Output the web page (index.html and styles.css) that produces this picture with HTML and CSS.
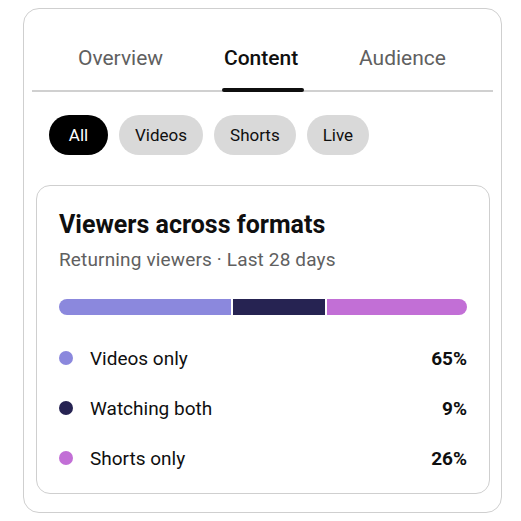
FILE: index.html
```html
<!DOCTYPE html>
<html lang="en">
<head>
  <meta charset="UTF-8">
  <meta name="viewport" content="width=device-width, initial-scale=1.0">
  <title>Content</title>
  <link rel="stylesheet" href="styles.css">
</head>
<body>

  <div class="panel">
    <nav class="tabs">
      <div class="tab">Overview</div>
      <div class="tab active">Content</div>
      <div class="tab">Audience</div>
    </nav>

    <div class="chips">
      <button class="chip selected">All</button>
      <button class="chip">Videos</button>
      <button class="chip">Shorts</button>
      <button class="chip">Live</button>
    </div>

    <div class="card">
      <h2 class="card-title">Viewers across formats</h2>
      <div class="card-sub">Returning viewers · Last 28 days</div>

      <div class="bar">
        <div class="seg seg-videos"></div>
        <div class="seg seg-both"></div>
        <div class="seg seg-shorts"></div>
      </div>

      <div class="legend">
        <div class="legend-row">
          <span class="dot dot-videos"></span>
          <span class="legend-label">Videos only</span>
          <span class="legend-value">65%</span>
        </div>
        <div class="legend-row">
          <span class="dot dot-both"></span>
          <span class="legend-label">Watching both</span>
          <span class="legend-value">9%</span>
        </div>
        <div class="legend-row">
          <span class="dot dot-shorts"></span>
          <span class="legend-label">Shorts only</span>
          <span class="legend-value">26%</span>
        </div>
      </div>
    </div>
  </div>

</body>
</html>
```

FILE: styles.css
```css
body {
  margin: 0;
  font-family: Roboto, "Liberation Sans", Arial, sans-serif;
  background-color: #fff;
  color: #0f0f0f;
}

.panel {
  width: 479px;
  box-sizing: border-box;
  margin: 8px 0 0 23px;
  padding: 0 8px 18px;
  border: 1px solid #cfcfcf;
  border-radius: 16px;
}

.tabs {
  display: flex;
  justify-content: space-between;
  padding: 0 47px 0 46px;
  border-bottom: 2px solid #d0d0d0;
}

.tab {
  position: relative;
  padding: 37px 0 20px;
  font-size: 21px;
  line-height: 24px;
  color: #606060;
}

.tab.active {
  color: #0f0f0f;
  font-weight: 500;
}

.tab.active::after {
  content: "";
  position: absolute;
  left: -2px;
  bottom: -2px;
  width: calc(100% + 8px);
  height: 4px;
  border-radius: 2px;
  background-color: #0f0f0f;
}

.chips {
  display: flex;
  gap: 11px;
  margin-top: 23px;
  padding-left: 17px;
}

.chip {
  min-width: 59px;
  height: 40px;
  padding: 0 16px;
  border: none;
  border-radius: 20px;
  background-color: #d9d9d9;
  color: #0f0f0f;
  font-family: inherit;
  font-size: 17px;
}

.chip.selected {
  background-color: #000;
  color: #fff;
}

.card {
  margin: 30px 3px 0 4px;
  padding: 25px 22px 10px;
  border: 1px solid #cfcfcf;
  border-radius: 14px;
}

.card-title {
  margin: 0;
  font-size: 25px;
  line-height: 28px;
  font-weight: 700;
}

.card-sub {
  margin-top: 9px;
  font-size: 19px;
  line-height: 24px;
  letter-spacing: 0.15px;
  color: #606060;
}

.bar {
  display: flex;
  gap: 2px;
  height: 16px;
  margin-top: 27px;
  border-radius: 8px;
  overflow: hidden;
}

.seg-videos {
  width: 172px;
  background-color: #8b88dd;
}

.seg-both {
  width: 92px;
  background-color: #262352;
}

.seg-shorts {
  flex: 1;
  background-color: #c26fd6;
}

.legend {
  margin-top: 18px;
}

.legend-row {
  display: flex;
  align-items: center;
  height: 50px;
  font-size: 19px;
}

.dot {
  width: 14px;
  height: 14px;
  border-radius: 50%;
  margin-right: 17px;
}

.dot-videos { background-color: #8b88dd; }
.dot-both { background-color: #262352; }
.dot-shorts { background-color: #c26fd6; }

.legend-label {
  flex: 1;
}

.legend-value {
  font-weight: 700;
}
```
